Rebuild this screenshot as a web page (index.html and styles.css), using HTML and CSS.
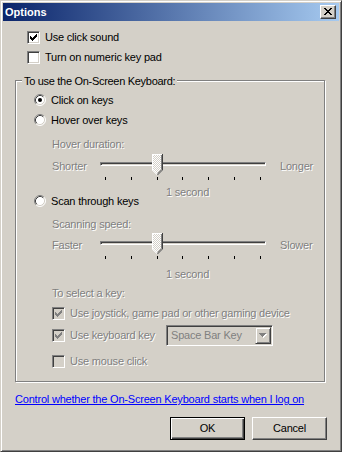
FILE: index.html
```html
<!DOCTYPE html>
<html>
<head>
<meta charset="utf-8">
<title>Options</title>
<link rel="stylesheet" href="styles.css">
</head>
<body>
<div class="window">
  <div class="titlebar">
    <span class="title">Options</span>
    <span class="close"><svg width="8" height="7" viewBox="0 0 8 7" shape-rendering="crispEdges"><path fill="#000" d="M0 0h2v1H0z M6 0h2v1H6z M1 1h2v1H1z M5 1h2v1H5z M2 2h4v1H2z M3 3h2v1H3z M2 4h4v1H2z M1 5h2v1H1z M5 5h2v1H5z M0 6h2v1H0z M6 6h2v1H6z"/></svg></span>
  </div>
  <div class="content">
    <div class="check-row row-click">
      <span class="cb"><svg width="7" height="7" viewBox="0 0 7 7" shape-rendering="crispEdges"><path fill="#000" d="M6 0h1v1H6z M5 1h2v1H5z M0 2h1v1H0z M4 2h3v1H4z M0 3h2v1H0z M3 3h3v1H3z M0 4h5v1H0z M1 5h3v1H1z M2 6h1v1H2z"/></svg></span>
      <span class="lbl">Use click sound</span>
    </div>
    <div class="check-row row-numpad">
      <span class="cb"></span>
      <span class="lbl">Turn on numeric key pad</span>
    </div>

    <div class="group">
      <span class="legend">To use the On-Screen Keyboard:</span>

      <div class="radio-row row-r1">
        <svg class="radio" width="12" height="12" viewBox="0 0 12 12"><circle cx="6" cy="6" r="5" fill="#fff"/><path d="M9.89 2.11A5.5 5.5 0 0 0 2.11 9.89" fill="none" stroke="#808080"/><path d="M2.11 9.89A5.5 5.5 0 0 0 9.89 2.11" fill="none" stroke="#fff"/><path d="M9.18 2.82A4.5 4.5 0 0 0 2.82 9.18" fill="none" stroke="#404040"/><path d="M2.82 9.18A4.5 4.5 0 0 0 9.18 2.82" fill="none" stroke="#d4d0c8"/><circle cx="6" cy="6" r="2" fill="#000"/></svg>
        <span class="lbl">Click on keys</span>
      </div>
      <div class="radio-row row-r2">
        <svg class="radio" width="12" height="12" viewBox="0 0 12 12"><circle cx="6" cy="6" r="5" fill="#fff"/><path d="M9.89 2.11A5.5 5.5 0 0 0 2.11 9.89" fill="none" stroke="#808080"/><path d="M2.11 9.89A5.5 5.5 0 0 0 9.89 2.11" fill="none" stroke="#fff"/><path d="M9.18 2.82A4.5 4.5 0 0 0 2.82 9.18" fill="none" stroke="#404040"/><path d="M2.82 9.18A4.5 4.5 0 0 0 9.18 2.82" fill="none" stroke="#d4d0c8"/></svg>
        <span class="lbl">Hover over keys</span>
      </div>

      <div class="sub">
        <div class="dis caption cap-hover">Hover duration:</div>
        <div class="slider slider-hover">
          <span class="dis sl-label">Shorter</span>
          <div class="sl-body">
            <div class="track"></div>
            <svg class="thumb" width="11" height="21" viewBox="0 0 11 21"><defs><pattern id="dith1" width="2" height="2" patternUnits="userSpaceOnUse"><rect width="2" height="2" fill="#d4d0c8"/><rect width="1" height="1" fill="#fff"/><rect x="1" y="1" width="1" height="1" fill="#fff"/></pattern></defs><path d="M0 0H11V16L5.5 21.5L0 16Z" fill="url(#dith1)"/><path d="M0.5 16V0.5H10" fill="none" stroke="#fff"/><path d="M0.5 16L5 20.5" fill="none" stroke="#fff"/><path d="M10.5 0V16L5.5 21" fill="none" stroke="#404040"/><path d="M9.5 1V15.6L5.5 19.6" fill="none" stroke="#808080"/></svg>
            <div class="ticks"><i></i><i></i><i></i><i></i><i></i><i></i><i></i></div>
            <div class="dis sec sec-hover">1 second</div>
          </div>
          <span class="dis sl-label sl-right">Longer</span>
        </div>
      </div>

      <div class="radio-row row-r3">
        <svg class="radio" width="12" height="12" viewBox="0 0 12 12"><circle cx="6" cy="6" r="5" fill="#fff"/><path d="M9.89 2.11A5.5 5.5 0 0 0 2.11 9.89" fill="none" stroke="#808080"/><path d="M2.11 9.89A5.5 5.5 0 0 0 9.89 2.11" fill="none" stroke="#fff"/><path d="M9.18 2.82A4.5 4.5 0 0 0 2.82 9.18" fill="none" stroke="#404040"/><path d="M2.82 9.18A4.5 4.5 0 0 0 9.18 2.82" fill="none" stroke="#d4d0c8"/></svg>
        <span class="lbl">Scan through keys</span>
      </div>

      <div class="sub">
        <div class="dis caption cap-scan">Scanning speed:</div>
        <div class="slider slider-scan">
          <span class="dis sl-label">Faster</span>
          <div class="sl-body">
            <div class="track"></div>
            <svg class="thumb" width="11" height="21" viewBox="0 0 11 21"><defs><pattern id="dith2" width="2" height="2" patternUnits="userSpaceOnUse"><rect width="2" height="2" fill="#d4d0c8"/><rect width="1" height="1" fill="#fff"/><rect x="1" y="1" width="1" height="1" fill="#fff"/></pattern></defs><path d="M0 0H11V16L5.5 21.5L0 16Z" fill="url(#dith2)"/><path d="M0.5 16V0.5H10" fill="none" stroke="#fff"/><path d="M0.5 16L5 20.5" fill="none" stroke="#fff"/><path d="M10.5 0V16L5.5 21" fill="none" stroke="#404040"/><path d="M9.5 1V15.6L5.5 19.6" fill="none" stroke="#808080"/></svg>
            <div class="ticks"><i></i><i></i><i></i><i></i><i></i><i></i><i></i></div>
            <div class="dis sec sec-scan">1 second</div>
          </div>
          <span class="dis sl-label sl-right">Slower</span>
        </div>

        <div class="dis caption cap-select">To select a key:</div>

        <div class="check-row row-joy">
          <span class="cb cb-dis"><svg width="7" height="7" viewBox="0 0 7 7" shape-rendering="crispEdges"><path fill="#808080" d="M6 0h1v1H6z M5 1h2v1H5z M0 2h1v1H0z M4 2h3v1H4z M0 3h2v1H0z M3 3h3v1H3z M0 4h5v1H0z M1 5h3v1H1z M2 6h1v1H2z"/></svg></span>
          <span class="lbl dis">Use joystick, game pad or other gaming device</span>
        </div>
        <div class="check-row row-key">
          <span class="cb cb-dis"><svg width="7" height="7" viewBox="0 0 7 7" shape-rendering="crispEdges"><path fill="#808080" d="M6 0h1v1H6z M5 1h2v1H5z M0 2h1v1H0z M4 2h3v1H4z M0 3h2v1H0z M3 3h3v1H3z M0 4h5v1H0z M1 5h3v1H1z M2 6h1v1H2z"/></svg></span>
          <span class="lbl dis key-lbl">Use keyboard key</span>
          <div class="combo">
            <span class="combo-text">Space Bar Key</span>
            <span class="combo-btn"><svg width="8" height="5" viewBox="0 0 8 5" shape-rendering="crispEdges"><path fill="#fff" d="M1 1h7v1H1z M2 2h5v1H2z M3 3h3v1H3z M4 4h1v1H4z"/><path fill="#808080" d="M0 0h7v1H0z M1 1h5v1H1z M2 2h3v1H2z M3 3h1v1H3z"/></svg></span>
          </div>
        </div>
        <div class="check-row row-mouse">
          <span class="cb cb-dis"></span>
          <span class="lbl dis">Use mouse click</span>
        </div>
      </div>
    </div>

    <a class="link" href="#">Control whether the On-Screen Keyboard starts when I log on</a>

    <div class="buttons">
      <button class="btn btn-default">OK</button>
      <button class="btn">Cancel</button>
    </div>
  </div>
</div>
</body>
</html>
```

FILE: styles.css
```css
html, body {
  margin: 0;
  padding: 0;
  background: #d4d0c8;
}

body {
  font-family: "Liberation Sans", Arial, sans-serif;
  font-size: 11px;
  line-height: 13px;
  color: #000;
  letter-spacing: -0.2px;
}

.window {
  width: 342px;
  height: 452px;
  box-sizing: border-box;
  background: #d4d0c8;
  border: 1px solid;
  border-color: #d4d0c8 #404040 #404040 #d4d0c8;
  box-shadow: inset 1px 1px 0 #fff, inset -1px -1px 0 #808080;
  padding: 2px;
  display: flex;
  flex-direction: column;
}

.titlebar {
  height: 18px;
  flex: none;
  display: flex;
  align-items: center;
  justify-content: space-between;
  padding: 0 3px 0 2px;
  background: linear-gradient(to right, #0a246a, #a6caf0);
}

.title {
  color: #fff;
  font-weight: bold;
  letter-spacing: 0;
}

.close {
  width: 16px;
  height: 14px;
  box-sizing: border-box;
  background: #d4d0c8;
  border: 1px solid;
  border-color: #fff #404040 #404040 #fff;
  box-shadow: inset -1px -1px 0 #808080;
  display: flex;
  align-items: center;
  justify-content: center;
  padding: 0 1px 1px 0;
}

.close svg { display: block; }

.content {
  flex: 1;
  display: flex;
  flex-direction: column;
  align-items: flex-start;
}

/* checkboxes */
.check-row {
  display: flex;
  align-items: center;
  height: 13px;
}

.cb {
  width: 13px;
  height: 13px;
  box-sizing: border-box;
  flex: none;
  border: 1px solid;
  border-color: #808080 #fff #fff #808080;
  box-shadow: inset 1px 1px 0 #404040, inset -1px -1px 0 #d4d0c8;
  background: #fff;
  padding: 2px;
}

.cb svg { display: block; }

.cb-dis { background: #d4d0c8; }

.check-row .lbl { margin-left: 5px; white-space: nowrap; }

.row-click { margin: 10px 0 0 24px; }
.row-numpad { margin: 7px 0 0 24px; }

/* group box */
.group {
  position: relative;
  margin: 16px 0 0 12px;
  width: 310px;
  height: 302px;
  flex: none;
  box-sizing: border-box;
  border: 1px solid #808080;
  box-shadow: inset 1px 1px 0 #fff, 1px 1px 0 #fff;
  padding-left: 18px;
}

.legend {
  position: absolute;
  top: -6px;
  left: 6px;
  padding: 0 2px;
  background: #d4d0c8;
  white-space: nowrap;
  letter-spacing: -0.3px;
}

.radio-row {
  display: flex;
  align-items: center;
  height: 12px;
}

.radio { display: block; flex: none; }
.radio-row .lbl { margin-left: 5px; white-space: nowrap; }

.row-r1 { margin-top: 13px; }
.row-r2 { margin-top: 8px; }
.row-r3 { margin-top: -2px; }

.sub {
  margin-left: 18px;
  display: flex;
  flex-direction: column;
  align-items: flex-start;
}

.dis {
  color: #808080;
  text-shadow: 1px 1px 0 #fff;
}

.caption { white-space: nowrap; }
.cap-hover { margin-top: 12px; }
.cap-scan { margin-top: 11px; }
.cap-select { margin-top: 8px; }

/* sliders */
.slider {
  display: flex;
  align-items: flex-start;
}

.slider-hover { margin-top: 3px; }
.slider-scan { margin-top: 2px; }

.sl-label {
  width: 48px;
  margin-top: 6px;
  flex: none;
}

.sl-right {
  width: auto;
  margin-left: 14px;
}

.sl-body {
  position: relative;
  width: 166px;
  flex: none;
}

.track {
  margin-top: 8px;
  height: 4px;
  box-sizing: border-box;
  border: 1px solid;
  border-color: #808080 #fff #fff #808080;
  box-shadow: inset 1px 1px 0 #404040;
}

.thumb {
  position: absolute;
  top: 0;
  left: 52px;
  display: block;
}

.ticks {
  margin: 11px 0 0 5px;
  width: 156px;
  display: flex;
  justify-content: space-between;
}

.ticks i {
  display: block;
  width: 1px;
  height: 3px;
  background: #000;
}

.sec {
  line-height: 9px;
  height: 9px;
  margin-left: 66px;
  white-space: nowrap;
}

.sec-hover { margin-top: 8px; }
.sec-scan { margin-top: 11px; }

/* select key rows */
.row-joy { margin-top: 7px; }
.row-key { margin-top: 5px; height: 21px; }
.row-mouse { margin-top: 9px; }

.key-lbl { width: 98px; flex: none; }

.combo {
  width: 107px;
  height: 21px;
  box-sizing: border-box;
  flex: none;
  margin-left: -2px;
  border: 1px solid;
  border-color: #808080 #fff #fff #808080;
  box-shadow: inset 1px 1px 0 #404040, inset -1px -1px 0 #d4d0c8;
  padding: 1px;
  display: flex;
  align-items: stretch;
}

.combo-text {
  flex: 1;
  padding-left: 3px;
  color: #808080;
  line-height: 17px;
  white-space: nowrap;
}

.combo-btn {
  width: 16px;
  box-sizing: border-box;
  flex: none;
  border: 1px solid;
  border-color: #d4d0c8 #404040 #404040 #d4d0c8;
  box-shadow: inset 1px 1px 0 #fff, inset -1px -1px 0 #808080;
  display: flex;
  align-items: center;
  justify-content: center;
}

.combo-btn svg { display: block; }

/* link */
.link {
  margin: 11px 0 0 12px;
  color: #0000ff;
  text-decoration: underline;
  white-space: nowrap;
}

/* buttons */
.buttons {
  align-self: stretch;
  margin-top: 11px;
  padding-right: 12px;
  display: flex;
  justify-content: flex-end;
  gap: 7px;
}

.btn {
  width: 75px;
  height: 23px;
  box-sizing: border-box;
  margin: 0;
  padding: 0;
  font: inherit;
  letter-spacing: inherit;
  color: #000;
  background: #d4d0c8;
  border: 1px solid;
  border-color: #fff #404040 #404040 #fff;
  box-shadow: inset -1px -1px 0 #808080;
  border-radius: 0;
}

.btn-default {
  border-color: #000;
  box-shadow: inset 1px 1px 0 #fff, inset -1px -1px 0 #404040, inset -2px -2px 0 #808080;
}
```
